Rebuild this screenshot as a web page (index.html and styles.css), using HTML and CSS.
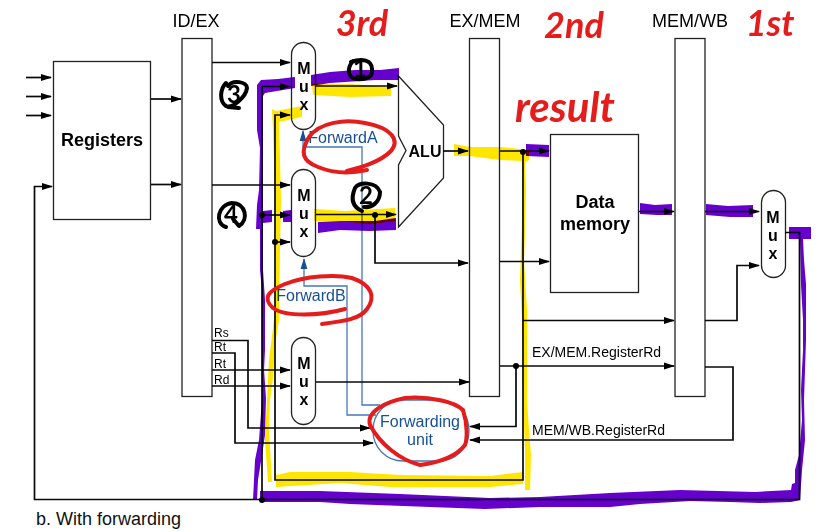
FILE: index.html
```html
<!DOCTYPE html>
<html lang="en">
<head>
<meta charset="utf-8">
<meta name="viewport" content="width=device-width, initial-scale=1">
<title>Pipeline with forwarding</title>
<link rel="stylesheet" href="styles.css">
</head>
<body>
<figure class="figure">
<svg class="diagram" viewBox="0 0 818 506">
  <defs>
    <marker id="arrow" viewBox="0 0 11 8" refX="10" refY="4" markerWidth="11" markerHeight="8" markerUnits="userSpaceOnUse" orient="auto"><path d="M0 .6L11 4L0 7.4Z"/></marker>
    <marker id="arrow-blue" class="control-head" viewBox="0 0 11 8" refX="10" refY="4" markerWidth="11" markerHeight="8" markerUnits="userSpaceOnUse" orient="auto"><path d="M0 .6L11 4L0 7.4Z"/></marker>
  </defs>

  <!-- Forwarding control -->
  <g class="control">
    <rect x="373" y="400" width="96" height="61" rx="30"/>
    <path class="control-arrow" d="M380 405H362V147H303V131"/>
    <path class="control-arrow" d="M376 415H347V286H304V259"/>
  </g>

  <!-- Registers, stages and units -->
  <g class="box">
    <rect x="53.5" y="61.5" width="97" height="158"/>
    <rect x="182" y="38.5" width="30" height="358"/>
    <rect x="469.5" y="38.5" width="30" height="358"/>
    <rect x="675" y="38.5" width="30" height="358"/>
    <rect x="550.5" y="134.5" width="88" height="158"/>
    <rect x="291.5" y="42.5" width="24" height="87" rx="12"/>
    <rect x="291.5" y="169.5" width="24" height="87" rx="12"/>
    <rect x="291.5" y="337.5" width="24" height="87" rx="12"/>
    <rect x="761.5" y="190.5" width="24" height="87" rx="12"/>
    <path d="M398.5 76L443.5 125V178L398.5 227V165L406 150.5L398.5 136Z"/>
  </g>

  <!-- Data paths -->
  <g class="wire">
    <path d="M26 77.5H51"/><path d="M26 96.5H51"/><path d="M26 115.5H51"/>
    <path d="M151 99H181"/><path d="M151 184.5H181"/>
    <path d="M785 232.500H799.5V499.5H34.5V186.5H52"/>
    <path d="M212 62.5H290"/><path d="M262 499V86.5H290"/>
    <path d="M523 151V480H275V115H290"/>
    <path d="M212 185H290"/><path d="M262 215H290"/><path d="M275 242H290"/>
    <path d="M316 86H397"/><path d="M316 214.5H396"/><path d="M375 215V263H468"/>
    <path d="M443 151H468"/><path d="M500 151H549"/><path d="M500 261.5H549"/>
    <path d="M639 211.5H674"/><path d="M705 211.5H759"/>
    <path d="M523 320.5H674"/><path d="M705 320.5H737V265.5H759"/>
    <path d="M500 366H674"/><path d="M516 366V426.5H470"/>
    <path d="M705 367H733V440H470"/>
    <path d="M212 340.500H248V428H370"/><path d="M212 353H235V443H373"/>
    <path d="M212 370H290"/><path d="M212 386H290"/><path d="M316 382H469"/>
  </g>
  <g class="joint">
    <circle cx="262" cy="215" r="3"/><circle cx="275" cy="242" r="3"/><circle cx="375" cy="215" r="3"/>
    <circle cx="523" cy="152" r="3"/><circle cx="516" cy="366" r="3"/><circle cx="262" cy="500" r="3"/>
  </g>

  <!-- Labels -->
  <g class="label">
    <text x="196" y="27">ID/EX</text>
    <text x="485" y="27">EX/MEM</text>
    <text x="690" y="27">MEM/WB</text>
  </g>
  <g class="unit">
    <text x="102" y="146">Registers</text>
    <text x="595" y="208">Data</text>
    <text x="595" y="230">memory</text>
    <text class="alu" x="425" y="157">ALU</text>
  </g>
  <g class="mux">
    <text><tspan x="304" y="74">M</tspan><tspan x="304" y="92">u</tspan><tspan x="304" y="110">x</tspan></text>
    <text><tspan x="304" y="201">M</tspan><tspan x="304" y="219">u</tspan><tspan x="304" y="237">x</tspan></text>
    <text><tspan x="304" y="369">M</tspan><tspan x="304" y="387">u</tspan><tspan x="304" y="405">x</tspan></text>
    <text><tspan x="773" y="223">M</tspan><tspan x="773" y="241">u</tspan><tspan x="773" y="259">x</tspan></text>
  </g>
  <g class="field">
    <text x="214" y="337">Rs</text><text x="214" y="351">Rt</text>
    <text x="214" y="368">Rt</text><text x="214" y="384">Rd</text>
  </g>
  <g class="signal">
    <text x="532" y="357">EX/MEM.RegisterRd</text>
    <text x="532" y="435">MEM/WB.RegisterRd</text>
  </g>
  <g class="control-label">
    <text x="343" y="143">ForwardA</text>
    <text x="311" y="301">ForwardB</text>
    <text x="420" y="427">Forwarding</text>
    <text x="420" y="445">unit</text>
  </g>

  <!-- Yellow highlighter -->
  <g class="marker yellow">
    <path d="M312 84H350L391 87V96L350 97L313 95Z"/>
    <path d="M272 109L276 111L302 106V117L279 122L280 160L281 200L280 250L279 320L275 345L273 378L270 400L269 430L272 482H268L265 440L267 400L269 360L273 328L275 310L276 230L273 130Z"/>
    <path d="M314 209L345 211L395 208V221L370 224L340 221L314 221Z"/>
    <path d="M454 144L470 147L500 147L529 150V160L525 162L526 190L525 235L524 260L527 310L527 400L529 430L531 455L530 490H525V450L523 400L522 320L520 280L521 250L522 220V161L500 160L469 156L454 156Z"/>
    <path d="M276 475L290 472L350 472L400 475L490 476L523 472V484L490 487L390 487L340 483L276 487Z"/>
  </g>

  <!-- Purple highlighter -->
  <g class="marker purple">
    <path d="M261 80L278 79L295 77V88L265 93L263 96V211L272 210V222L263 223V270L265 300V350L264 370L266 398L265 435L262 455L258 480L257 500H253L254 480L255 460L259 440L262 400V290L260 270V229H256L257 205L259 190L260 148L257 130V85Z"/>
    <path d="M283 211L291 210V222H283Z"/>
    <path d="M311 75L330 72L355 70L380 70L399 68V80L375 80L330 83L311 86Z"/>
    <path d="M318 222L340 221L375 221L396 218V230L370 231L340 230L318 233Z"/>
    <path d="M526 144L549 145V157L526 156Z"/>
    <path d="M640 203L655 205L672 204V215H657L640 214Z"/>
    <path d="M706 204L728 206L753 205V217L730 217L706 215Z"/>
    <path d="M789 227H811V239H803L804 260L806 284V340L804 400L805 440L802 470L800 500L791 502L760 503L730 502L690 501L640 504L610 507L540 507L485 509L430 507L350 504L320 502L260 502V491L320 491L400 494L490 498L540 497L610 493L680 490L755 492L791 490L792 484L795 483V470L799 455L802 420L801 390L803 350V320L801 285L800 239H789Z"/>
  </g>

  <!-- Pen rings -->
  <g class="ring red-ring">
    <path d="M367 170Q340 176 318 167C302 161 300 152 309 137C320 122 345 119 365 123C392 128 400 140 391 151C380 162 362 167 347 171"/>
    <path d="M345 309C320 316 285 317 273 308C262 298 268 291 285 284C305 276 335 274 352 278C372 285 376 297 367 309C360 319 345 321 322 324"/>
    <path d="M420 465C400 460 380 444 370 425C366 412 385 402 405 398C430 396 455 402 463 410C468 425 467 440 465 445C455 458 435 463 420 465"/>
  </g>
  <g class="ring black-ring">
    <path d="M353 61C347 68 347 77 356 79C368 80 373 76 372 69C372 60 362 58 351 62"/>
    <path d="M226 83C220 89 219 101 226 106C232 109 246 97 247 88C247 82 233 79 228 86M228 107L239 108"/>
    <path d="M232 203C218 205 214 223 226 227M232 203C246 203 249 220 239 226L233 219"/>
    <path d="M355 188C359 182 376 181 380 192C380 202 372 208 364 207M355 188C350 200 353 207 362 211"/>
  </g>

  <!-- Pen notes -->
  <g class="note red-note">
    <text x="362" y="36">3rd</text>
    <text x="574" y="38">2nd</text>
    <text x="770" y="36">1st</text>
    <text class="result" x="565" y="122">result</text>
  </g>
  <g class="note step">
    <text x="360" y="77">1</text>
    <text x="366" y="204">2</text>
    <text x="234" y="103">3</text>
    <text x="231" y="223">4</text>
  </g>
</svg>
<figcaption class="caption">b. With forwarding</figcaption>
</figure>
</body>
</html>
```
FILE: styles.css
```css
body {
  margin: 0;
  background: #fff;
  color: #111;
  font-family: "Liberation Sans", Arial, sans-serif;
}

.figure {
  margin: 0;
}

.diagram {
  display: block;
  width: 100%;
  height: auto;
  overflow: visible;
  isolation: isolate;
}

.caption {
  padding-left: 36px;
  font-size: 18px;
  line-height: 26px;
}

.box {
  fill: none;
  stroke: #222;
  stroke-width: 1.3;
}

.wire path {
  fill: none;
  stroke: #080808;
  stroke-width: 1.7;
  marker-end: url(#arrow);
}

.control {
  fill: none;
  stroke: #4777b5;
  stroke-width: 1.3;
}

.control-arrow {
  marker-end: url(#arrow-blue);
}

.control-head {
  fill: #174f96;
  stroke: none;
}

.label,
.unit,
.mux,
.control-label,
.note {
  text-anchor: middle;
}

.label {
  font-size: 18px;
}

.unit {
  font-size: 18px;
  font-weight: 700;
}

.alu {
  font-size: 16px;
}

.mux {
  font-size: 16px;
  font-weight: 700;
}

.field {
  font-size: 12px;
}

.signal {
  font-size: 14px;
}

.control-label {
  fill: #174f96;
  font-size: 16px;
}

.marker {
  mix-blend-mode: multiply;
}

.yellow {
  fill: #ffe600;
}

.purple {
  fill: #6600cc;
}

.ring {
  fill: none;
  stroke-linecap: round;
  stroke-linejoin: round;
}

.red-ring {
  stroke: #e51c1c;
  stroke-width: 4;
}

.black-ring {
  stroke: #000;
  stroke-width: 4;
}

.note {
  font-family: Lato, "Liberation Sans", sans-serif;
}

.red-note {
  fill: #e51c1c;
  font-size: 36px;
  font-style: italic;
  font-weight: 700;
}

.result {
  font-size: 42px;
}

.step {
  fill: #000;
  font-size: 24px;
  font-weight: 700;
}
```
